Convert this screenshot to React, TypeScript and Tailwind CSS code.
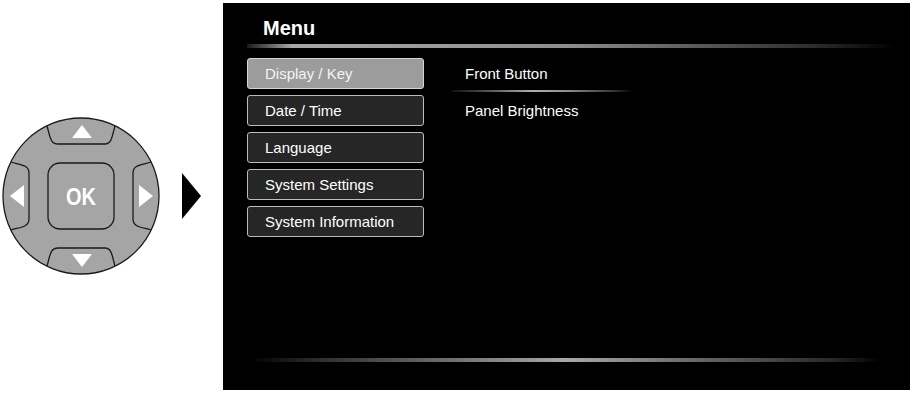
import React from 'react';

const menuItems = ['Display / Key', 'Date / Time', 'Language', 'System Settings', 'System Information'];

const DPad: React.FC = () => (
  <svg width="210" height="160" viewBox="0 0 210 160" className="mt-[116px] shrink-0">
    <circle cx="81" cy="80" r="78" fill="#a5a5a5" stroke="#1a1a1a" strokeWidth="1.3" />
    {/* direction tabs */}
    <path d="M47,10 C50,20 50,28 58,28 L105,28 C112,28 112,20 115,10" fill="none" stroke="#1a1a1a" strokeWidth="1.3" />
    <path d="M47,150 C50,140 50,132 58,132 L105,132 C112,132 112,140 115,150" fill="none" stroke="#1a1a1a" strokeWidth="1.3" />
    <path d="M11,46 C21,49 29,49 29,57 L29,103 C29,111 21,111 11,114" fill="none" stroke="#1a1a1a" strokeWidth="1.3" />
    <path d="M151,46 C141,49 133,49 133,57 L133,103 C133,111 141,111 151,114" fill="none" stroke="#1a1a1a" strokeWidth="1.3" />
    <rect x="48" y="47" width="66" height="66" rx="12" fill="#a5a5a5" stroke="#1a1a1a" strokeWidth="1.3" />
    {/* arrows */}
    <polygon points="72,22 92,22 82,9" fill="#fff" />
    <polygon points="72,138 92,138 82,151" fill="#fff" />
    <polygon points="10,80 24,69 24,91" fill="#fff" />
    <polygon points="153,80 139,69 139,91" fill="#fff" />
    <text
      x="81"
      y="89"
      textAnchor="middle"
      fill="#fff"
      fontFamily="'Liberation Sans', Arial, sans-serif"
      fontWeight="bold"
      fontSize="24"
      textLength="30"
      lengthAdjust="spacingAndGlyphs"
    >
      OK
    </text>
    <polygon points="182,57 182,103 201,80" fill="#000" />
  </svg>
);

export default function App() {
  return (
    <div className="flex w-[912px] h-[397px] bg-white font-['Liberation_Sans',Arial,sans-serif] overflow-hidden">
      <DPad />
      <div className="mt-[3px] ml-[13px] w-[687px] h-[387px] bg-black flex flex-col">
        <div className="pl-[40px] pt-[14px] text-[20px] leading-[23px] font-bold text-white">Menu</div>
        <div className="mt-[4px] ml-[24px] mr-[14px] h-[4px] bg-[linear-gradient(to_right,#1a1a1a_0%,#a8a8a8_7%,#8c8c8c_50%,#2a2a2a_88%,#000_100%)]" />
        <div className="flex mt-[10px]">
          <div className="ml-[24px] w-[177px] flex flex-col gap-[6px]">
            {menuItems.map((item, i) => (
              <div
                key={item}
                className={
                  i === 0
                    ? 'h-[31px] flex items-center pt-[1px] pl-[17px] rounded-[3px] border border-[#d4d4d4] bg-[#9c9c9c] text-[15px] text-[#f4f4f4]'
                    : 'h-[31px] flex items-center pt-[1px] pl-[17px] rounded-[3px] border border-[#bcbcbc] bg-[#262626] text-[15px] text-white'
                }
              >
                {item}
              </div>
            ))}
          </div>
          <div className="ml-[28px] w-[181px] flex flex-col">
            <div className="h-[31px] flex items-center pt-[1px] pl-[13px] text-[15px] text-white">Front Button</div>
            <div className="mt-[1px] mb-[3px] h-[2px] bg-[linear-gradient(to_right,#111_0%,#555_20%,#b0b0b0_45%,#8a8a8a_65%,#333_90%,#000_100%)]" />
            <div className="h-[31px] flex items-center pt-[1px] pl-[13px] text-[15px] text-white">Panel Brightness</div>
          </div>
        </div>
        <div className="mt-auto mb-[28px] ml-[27px] mr-[30px] h-[4px] bg-[linear-gradient(to_right,#000_0%,#2a2a2a_10%,#6a6a6a_30%,#a8a8a8_50%,#6a6a6a_70%,#2a2a2a_92%,#000_100%)]" />
      </div>
    </div>
  );
}
